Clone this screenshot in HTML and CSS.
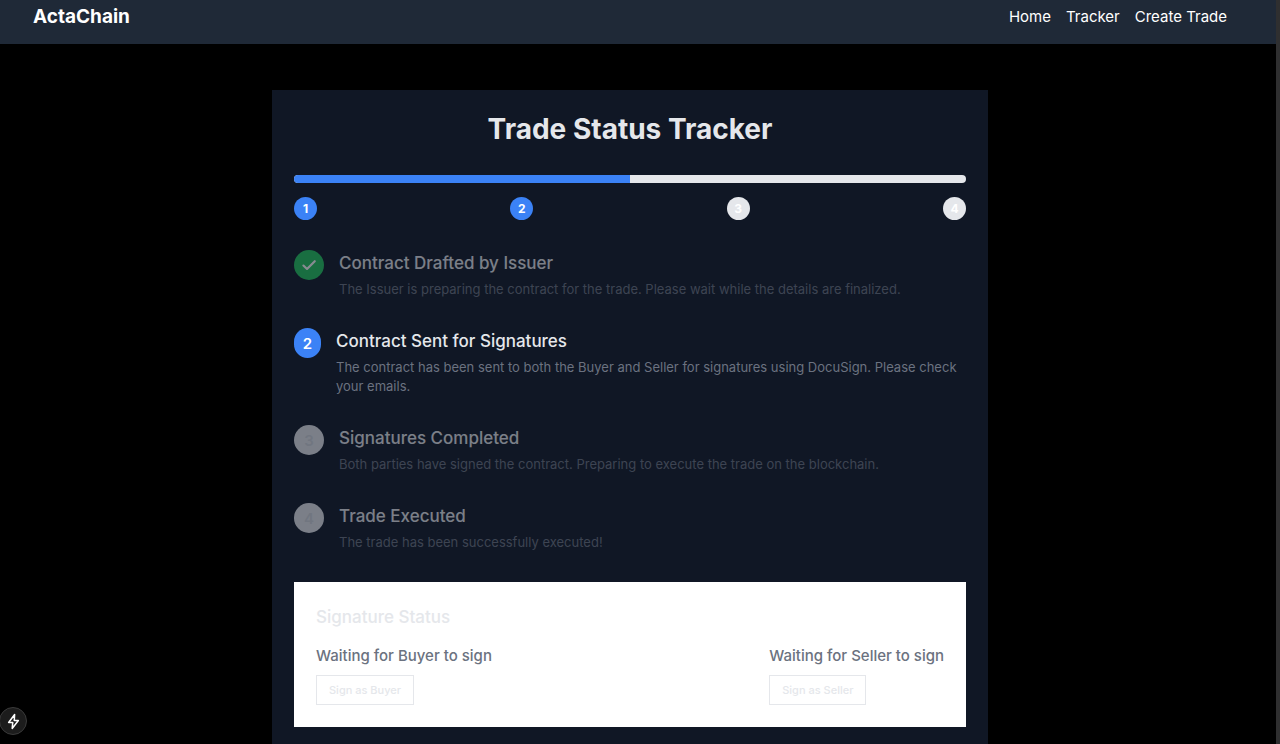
FILE: index.html
```html
<!DOCTYPE html>
<html lang="en">
<head>
<meta charset="utf-8">
<meta name="viewport" content="width=device-width, initial-scale=1">
<title>ActaChain</title>
<link rel="stylesheet" href="styles.css">
</head>
<body>
<header class="navbar">
  <a class="brand" href="#">ActaChain</a>
  <nav class="nav-links">
    <a href="#">Home</a>
    <a href="#">Tracker</a>
    <a href="#">Create Trade</a>
  </nav>
</header>
<main class="page">
  <section class="tracker">
    <h1 class="tracker-title">Trade Status Tracker</h1>
    <div class="progress"><div class="progress-fill"></div></div>
    <div class="markers">
      <span class="marker marker-on">1</span>
      <span class="marker marker-on">2</span>
      <span class="marker">3</span>
      <span class="marker">4</span>
    </div>
    <ol class="steps">
      <li class="step step-dim">
        <span class="badge badge-done"><svg class="check" viewBox="0 0 20 20" aria-hidden="true"><path d="M3.8 10.6 7.8 14.4 16.4 5.8"/></svg></span>
        <div class="step-text">
          <h2 class="step-title">Contract Drafted by Issuer</h2>
          <p class="step-desc">The Issuer is preparing the contract for the trade. Please wait while the details are finalized.</p>
        </div>
      </li>
      <li class="step">
        <span class="badge badge-current">2</span>
        <div class="step-text">
          <h2 class="step-title">Contract Sent for Signatures</h2>
          <p class="step-desc">The contract has been sent to both the Buyer and Seller for signatures using DocuSign. Please check your emails.</p>
        </div>
      </li>
      <li class="step step-dim">
        <span class="badge">3</span>
        <div class="step-text">
          <h2 class="step-title">Signatures Completed</h2>
          <p class="step-desc">Both parties have signed the contract. Preparing to execute the trade on the blockchain.</p>
        </div>
      </li>
      <li class="step step-dim">
        <span class="badge">4</span>
        <div class="step-text">
          <h2 class="step-title">Trade Executed</h2>
          <p class="step-desc">The trade has been successfully executed!</p>
        </div>
      </li>
    </ol>
    <section class="signatures">
      <h2 class="signatures-title">Signature Status</h2>
      <div class="signers">
        <div class="signer">
          <p class="signer-status">Waiting for Buyer to sign</p>
          <button class="sign-button" type="button">Sign as Buyer</button>
        </div>
        <div class="signer">
          <p class="signer-status">Waiting for Seller to sign</p>
          <button class="sign-button" type="button">Sign as Seller</button>
        </div>
      </div>
    </section>
  </section>
</main>
<button class="dev-button" type="button" aria-label="Open developer tools">
  <svg class="bolt" viewBox="0 0 16 18" aria-hidden="true"><path d="M9.2 1.6 2.8 10h4.4l-.6 6.4L13.2 8H8.8z"/></svg>
</button>
</body>
</html>
```
FILE: styles.css
```css
* {
  box-sizing: border-box;
}

html {
  height: 100%;
  background: #000;
}

body {
  height: 100%;
  margin: 0;
  overflow: hidden;
  border-right: 4px solid #2f2f30;
  background: #000;
  color: #e5e7eb;
  font-family: Inter, "Liberation Sans", sans-serif;
}

h1, h2, p, ol {
  margin: 0;
  padding: 0;
}

.navbar {
  display: flex;
  justify-content: space-between;
  align-items: center;
  padding: 4px 49px 15px 33px;
  background: #1f2937;
}

.navbar a {
  color: #fff;
  text-decoration: none;
}

.navbar .brand {
  font-size: 19px;
  line-height: 25px;
  font-weight: 700;
}

.nav-links {
  display: flex;
  gap: 15px;
  font-size: 15px;
  line-height: 25px;
}

.page {
  padding: 46px 16px 0 0;
}

.tracker {
  max-width: 716px;
  margin: 0 auto;
  padding: 22px;
  background: #101725;
}

.tracker-title {
  font-size: 28px;
  line-height: 34px;
  font-weight: 700;
  text-align: center;
}

.progress {
  height: 8px;
  margin-top: 29px;
  overflow: hidden;
  border-radius: 4px;
  background: #e5e7eb;
}

.progress-fill {
  width: 50%;
  height: 100%;
  background: #3b82f6;
}

.markers {
  display: flex;
  justify-content: space-between;
  margin-top: 14px;
}

.marker {
  display: flex;
  align-items: center;
  justify-content: center;
  width: 23px;
  height: 23px;
  border-radius: 50%;
  background: #e5e7eb;
  color: #fff;
  font-size: 12px;
  font-weight: 700;
}

.marker-on {
  background: #3b82f6;
}

.steps {
  display: flex;
  flex-direction: column;
  gap: 29px;
  margin-top: 30px;
  list-style: none;
}

.step {
  display: flex;
  align-items: flex-start;
  gap: 15px;
}

.step-dim {
  opacity: 0.5;
}

.badge {
  display: flex;
  flex: 0 0 30px;
  align-items: center;
  justify-content: center;
  height: 30px;
  border-radius: 50%;
  background: #e5e7eb;
  color: #d1d5db;
  font-size: 15px;
  font-weight: 600;
}

.badge-done {
  background: #22c55e;
}

.badge-current {
  flex-basis: 27px;
  border-radius: 15px;
  background: #3b82f6;
  color: #fff;
}

.check {
  width: 18px;
  height: 18px;
  fill: none;
  stroke: #fff;
  stroke-width: 2.4;
  stroke-linecap: round;
  stroke-linejoin: round;
}

.step-title {
  font-size: 17px;
  line-height: 26px;
  font-weight: 500;
}

.step-desc {
  margin-top: 4px;
  color: #6b7280;
  font-size: 13px;
  line-height: 19px;
}

.signatures {
  margin-top: 30px;
  padding: 22px;
  background: #fff;
}

.signatures-title {
  font-size: 17px;
  line-height: 26px;
  font-weight: 500;
}

.signers {
  display: flex;
  justify-content: space-between;
  margin-top: 15px;
}

.signer-status {
  color: #6b7280;
  font-size: 15px;
  line-height: 22px;
  font-weight: 500;
}

.sign-button {
  height: 30px;
  margin-top: 8px;
  padding: 0 12px;
  border: 1px solid #e5e7eb;
  background: #fff;
  color: #e5e7eb;
  font-family: inherit;
  font-size: 11px;
  font-weight: 500;
}

.dev-button {
  position: fixed;
  bottom: 9px;
  left: -1px;
  display: flex;
  align-items: center;
  justify-content: center;
  width: 28px;
  height: 28px;
  padding: 0;
  border: 1px solid #3a3a3a;
  border-radius: 50%;
  background: #1c1c1c;
}

.bolt {
  width: 15px;
  height: 17px;
  fill: none;
  stroke: #fff;
  stroke-width: 1.6;
  stroke-linejoin: round;
}
```
